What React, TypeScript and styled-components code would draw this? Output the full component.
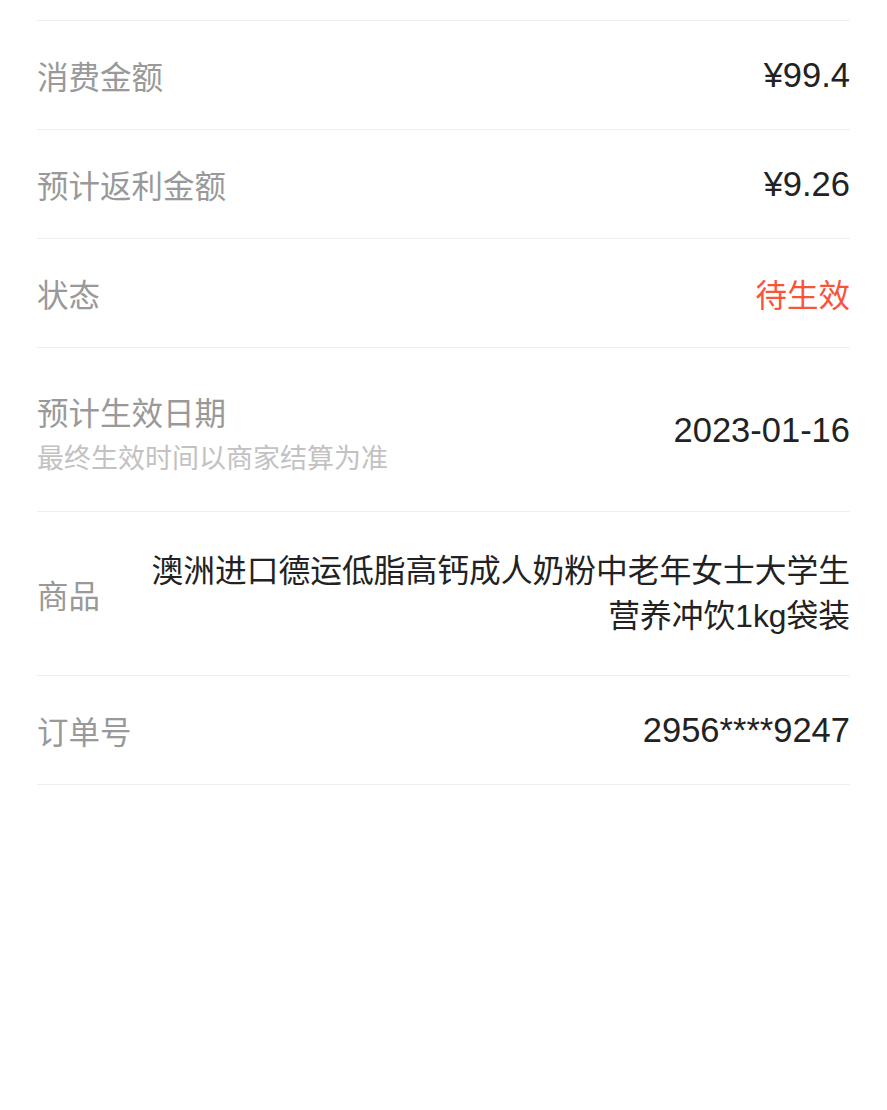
import styled, { createGlobalStyle } from 'styled-components'

const GlobalStyle = createGlobalStyle`
  html, body {
    margin: 0;
    padding: 0;
    background: #ffffff;
  }
  body {
    font-family: "Noto Sans CJK SC", "Liberation Sans", sans-serif;
    -webkit-font-smoothing: antialiased;
  }
`

const Page = styled.div`
  min-height: 1110px;
  padding: 0 37px;
  background: #ffffff;
`

const TopEdge = styled.div`
  height: 20px;
  border-bottom: 1px solid #eeeeee;
`

const Row = styled.div<{ $tall?: boolean }>`
  display: flex;
  flex-direction: row;
  align-items: center;
  justify-content: space-between;
  padding: 36px 0;
  min-height: ${(p) => (p.$tall ? 91 : 36)}px;
  border-bottom: 1px solid #eeeeee;
`

const LabelBlock = styled.div`
  display: flex;
  flex-direction: column;
  flex-shrink: 0;
  margin-top: 9px;
`

const Label = styled.div`
  font-size: 31.5px;
  line-height: 36px;
  color: #999999;
  white-space: nowrap;
  flex-shrink: 0;
`

const SubLabel = styled.div`
  font-size: 27px;
  line-height: 36px;
  margin-top: 10px;
  color: #c2c2c2;
  white-space: nowrap;
`

const Value = styled.div<{ $numeric?: boolean; $color?: string }>`
  font-family: ${(p) =>
    p.$numeric
      ? '"Liberation Sans", "Noto Sans CJK SC", sans-serif'
      : '"Noto Sans CJK SC", "Liberation Sans", sans-serif'};
  font-size: ${(p) => (p.$numeric ? 34.5 : 31.5)}px;
  line-height: 36px;
  color: ${(p) => p.$color || '#222222'};
  text-align: right;
`

const LongValue = styled.div`
  flex: 1;
  margin-left: 40px;
  font-family: "Liberation Sans", "Noto Sans CJK SC", sans-serif;
  font-size: 31.75px;
  line-height: 45px;
  color: #222222;
  text-align: right;
`

export default function App() {
  return (
    <>
      <GlobalStyle />
      <Page>
        <TopEdge />
        <Row>
          <Label>消费金额</Label>
          <Value $numeric>¥99.4</Value>
        </Row>
        <Row>
          <Label>预计返利金额</Label>
          <Value $numeric>¥9.26</Value>
        </Row>
        <Row>
          <Label>状态</Label>
          <Value $color="#fa5438">待生效</Value>
        </Row>
        <Row $tall>
          <LabelBlock>
            <Label>预计生效日期</Label>
            <SubLabel>最终生效时间以商家结算为准</SubLabel>
          </LabelBlock>
          <Value $numeric>2023-01-16</Value>
        </Row>
        <Row $tall>
          <Label>商品</Label>
          <LongValue>澳洲进口德运低脂高钙成人奶粉中老年女士大学生营养冲饮1kg袋装</LongValue>
        </Row>
        <Row>
          <Label>订单号</Label>
          <Value $numeric>2956****9247</Value>
        </Row>
      </Page>
    </>
  )
}
